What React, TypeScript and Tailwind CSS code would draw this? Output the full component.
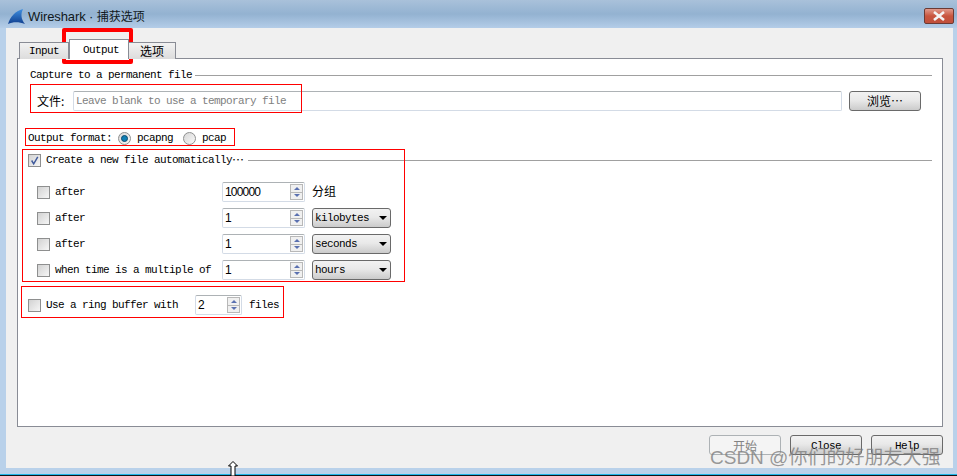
import type { ReactNode } from 'react'

const mono = "font-['Liberation_Mono','Noto_Sans_CJK_SC',monospace] text-[11px] tracking-[-0.6px] text-black"
const cjk = "font-['Noto_Sans_CJK_SC',sans-serif] text-[12px] tracking-normal"
const glass = 'bg-gradient-to-b from-[#f2f2f2] via-[#e9e9e9] via-45% to-[#cbcbcb]'

function Check({ checked }: { checked?: boolean }) {
  return (
    <span className="flex h-[13px] w-[13px] shrink-0 items-center justify-center border border-[#8e8f8f] bg-gradient-to-br from-[#d2d2d2] to-[#f6f6f6] p-px">
      {checked && (
        <svg viewBox="0 0 11 11" className="h-[11px] w-[11px]">
          <path d="M2 5.5 L4.5 9.5 L9.5 1" fill="none" stroke="#3f5a9c" strokeWidth="1.8" />
        </svg>
      )}
    </span>
  )
}

function Radio({ on }: { on?: boolean }) {
  return (
    <span className="flex h-[13px] w-[13px] shrink-0 items-center justify-center rounded-full border border-[#8e8f8f] bg-gradient-to-br from-[#d8d8d8] to-[#f8f8f8]">
      {on && <span className="h-[7px] w-[7px] rounded-full border border-[#0b4a6e] bg-[#0f7fb5]" />}
    </span>
  )
}

function Spin({ value, width }: { value: string; width: string }) {
  return (
    <div className={`flex h-5 items-center justify-between rounded-[2px] border border-[#d3dbe6] border-t-[#adb2b5] pl-[2px] pr-[1px] ${width}`}>
      <span className="font-['Liberation_Sans',sans-serif] text-[12px] tracking-[-0.8px] text-black">{value}</span>
      <span className="flex h-4 w-[13px] flex-col border border-[#b8b8b8] bg-[#f0f0f0]">
        <span className="flex flex-1 items-center justify-center border-b border-[#b8b8b8]">
          <span className="h-0 w-0 border-x-[3px] border-b-[3px] border-x-transparent border-b-[#5a70b0]" />
        </span>
        <span className="flex flex-1 items-center justify-center">
          <span className="h-0 w-0 border-x-[3px] border-t-[3px] border-x-transparent border-t-[#5a70b0]" />
        </span>
      </span>
    </div>
  )
}

function Select({ value }: { value: string }) {
  return (
    <div className={`flex h-5 w-[79px] items-center justify-between rounded-[3px] border border-[#6a6a6a] pl-[2px] pr-[3px] ${glass} ${mono}`}>
      <span className="pt-px">{value}</span>
      <span className="h-0 w-0 border-x-[4px] border-t-[4px] border-x-transparent border-t-black" />
    </div>
  )
}

function Btn({ children, disabled, className }: { children: ReactNode; disabled?: boolean; className?: string }) {
  return (
    <div
      className={`flex h-5 w-[72px] items-center justify-center rounded-[3px] border ${mono} ${
        disabled ? 'border-[#adb2b5] bg-[#f4f4f4] !text-[#838383]' : `border-[#6a6a6a] ${glass}`
      } ${className ?? ''}`}
    >
      {children}
    </div>
  )
}

function Row({ label, value, unit, labelClass }: { label: string; value: string; unit: ReactNode; labelClass?: string }) {
  return (
    <div className="flex h-5 items-center">
      <Check />
      <span className={`w-[172px] shrink-0 pl-[5px] pt-px ${labelClass ?? ''}`}>{label}</span>
      <Spin value={value} width="w-[83px]" />
      <div className="ml-[7px]">{unit}</div>
    </div>
  )
}

function Mark({ className }: { className: string }) {
  return <div className={`pointer-events-none absolute border border-[#ff0000] ${className}`} />
}

export default function App() {
  return (
    <div className="relative flex h-[476px] w-[957px] flex-col overflow-hidden bg-[#b9d1ea]">
      {/* title bar */}
      <div className="flex h-7 shrink-0 bg-gradient-to-b from-[#a9c1da] via-[#93b2d1] to-[#b4cde8] pl-[8px] pr-[3px]">
        <svg viewBox="0 0 17 15" className="mt-[9px] h-[15px] w-[17px] shrink-0">
          <defs>
            <linearGradient id="fin" x1="0" y1="0" x2="0" y2="1">
              <stop offset="0" stopColor="#3f8fe0" />
              <stop offset="1" stopColor="#103f8f" />
            </linearGradient>
          </defs>
          <path d="M0 15 C2 8 7 2 15 0 C12.5 5 13 10 17 15 C11 12.5 5 12.5 0 15Z" fill="url(#fin)" />
        </svg>
        <span className="ml-[3px] mt-[8px] h-4 font-['Liberation_Sans',sans-serif] text-[13px] leading-4 tracking-[-0.1px] text-[#101820]">
          Wireshark · <span className={cjk}>捕获选项</span>
        </span>
        <div className="ml-auto mt-[8px] flex h-[16px] w-[30px] items-center justify-center rounded-[2px] border border-[#6b3a34] bg-gradient-to-b from-[#e09a8c] via-[#c8553e] to-[#c0503c]">
          <svg viewBox="0 0 14 10" className="h-[10px] w-[14px]">
            <path d="M2 1 L12 9 M12 1 L2 9" stroke="#f4f4f4" strokeWidth="2.6" />
          </svg>
        </div>
      </div>

      {/* client */}
      <div className={`ml-[6px] mr-[4px] flex h-[440px] flex-col bg-[#f0f0f0] pl-[11px] pr-[10px] ${mono}`}>
        <div className="relative z-10 ml-[2px] mt-[11px] flex h-[20px] items-end">
          <div className="flex h-[17px] w-[50px] items-center justify-center border border-b-0 border-[#898c95] bg-gradient-to-b from-[#f2f2f2] to-[#dcdcdc]">Input</div>
          <div className="flex h-[20px] w-[60px] items-center justify-center border border-b-0 border-[#898c95] bg-white pl-[4px] pt-[1px]">Output</div>
          <div className={`flex h-[17px] w-[47px] items-center justify-center border border-b-0 border-l-0 border-[#898c95] bg-gradient-to-b from-[#f2f2f2] to-[#dcdcdc] ${cjk}`}>选项</div>
        </div>
        <div className="-mt-px h-[369px] border border-[#898c95] bg-white pl-[11px] pr-[10px]">
          <div className="mt-[10px] flex h-3 items-center gap-[3px]">
            <span className="whitespace-nowrap pl-px">Capture to a permanent file</span>
            <div className="h-px flex-1 bg-[#a0a0a0]" />
          </div>
          <div className="mt-[10px] flex items-center pl-[8px]">
            <span className={`w-[36px] shrink-0 ${cjk}`}>文件:</span>
            <div className="flex h-5 w-[769px] items-center rounded-[2px] border border-[#d3dbe6] border-t-[#adb2b5] pl-[2px] pt-px text-[#808080]">
              Leave blank to use a temporary file
            </div>
            <Btn className="ml-[7px]"><span className={cjk}>浏览⋯</span></Btn>
          </div>

          <div className="mt-[19px] -ml-px flex h-4 items-center">
            <span className="w-[90px] shrink-0 pt-px">Output format:</span>
            <Radio on />
            <span className="ml-[6px] w-[46px] pt-px">pcapng</span>
            <Radio />
            <span className="ml-[6px] pt-px">pcap</span>
          </div>

          <div className="mt-[8px] -ml-px flex h-[13px] items-center">
            <Check checked />
            <span className="ml-[5px] flex items-center whitespace-nowrap pb-px">
              Create a new file automatically<span className={`${cjk} w-[12px]`}>⋯</span>
            </span>
            <div className="ml-[4px] h-px flex-1 bg-[#a0a0a0]" />
          </div>

          <div className="mt-[15px] flex flex-col gap-[6px] pl-2">
            <Row label="after" value="100000" unit={<span className={cjk}>分组</span>} />
            <Row label="after" value="1" unit={<Select value="kilobytes" />} />
            <Row label="after" value="1" unit={<Select value="seconds" />} />
            <Row label="when time is a multiple of" value="1" unit={<Select value="hours" />} labelClass="whitespace-nowrap" />
          </div>

          <div className="mt-[15px] -ml-px flex h-5 items-center">
            <Check />
            <span className="ml-[5px] w-[149px] whitespace-nowrap pt-px">Use a ring buffer with</span>
            <Spin value="2" width="w-[47px]" />
            <span className="ml-[7px] pt-px">files</span>
          </div>
        </div>
        <div className="mt-[8px] flex justify-end gap-[9px]">
          <Btn disabled><span className={`${cjk} pt-px`}>开始</span></Btn>
          <Btn className="pt-[2px]">Close</Btn>
          <Btn className="pt-[2px]">Help</Btn>
        </div>
      </div>

      <div className="mt-auto h-px bg-[#1fb6e8]" />
      <div className="h-px bg-[#10141a]" />

      {/* red annotations drawn over the dialog */}
      <div className="pointer-events-none absolute left-[62px] top-[28px] h-[36px] w-[71px] rounded-[2px] border-[4px] border-[#ff0000]" />
      <Mark className="left-[30px] top-[84px] h-[29px] w-[272px]" />
      <Mark className="left-[25px] top-[128px] h-[18px] w-[210px]" />
      <Mark className="left-[22px] top-[149px] h-[133px] w-[383px]" />
      <Mark className="left-[21px] top-[286px] h-[32px] w-[263px]" />

      {/* mouse pointer */}
      <svg viewBox="0 0 10 15" className="pointer-events-none absolute left-[228px] top-[461px] h-[15px] w-[10px]">
        <path d="M5 .5 L9.5 5 H7 V15 H3 V5 H.5Z" fill="#fff" stroke="#000" />
      </svg>

      {/* watermark */}
      <div className="pointer-events-none absolute left-[710px] top-[446px] whitespace-nowrap font-['Liberation_Sans','Noto_Sans_CJK_SC',sans-serif] text-[19px] leading-6 text-[#7f7f7f]/80">
        CSDN @你们的好朋友大强
      </div>
    </div>
  )
}
